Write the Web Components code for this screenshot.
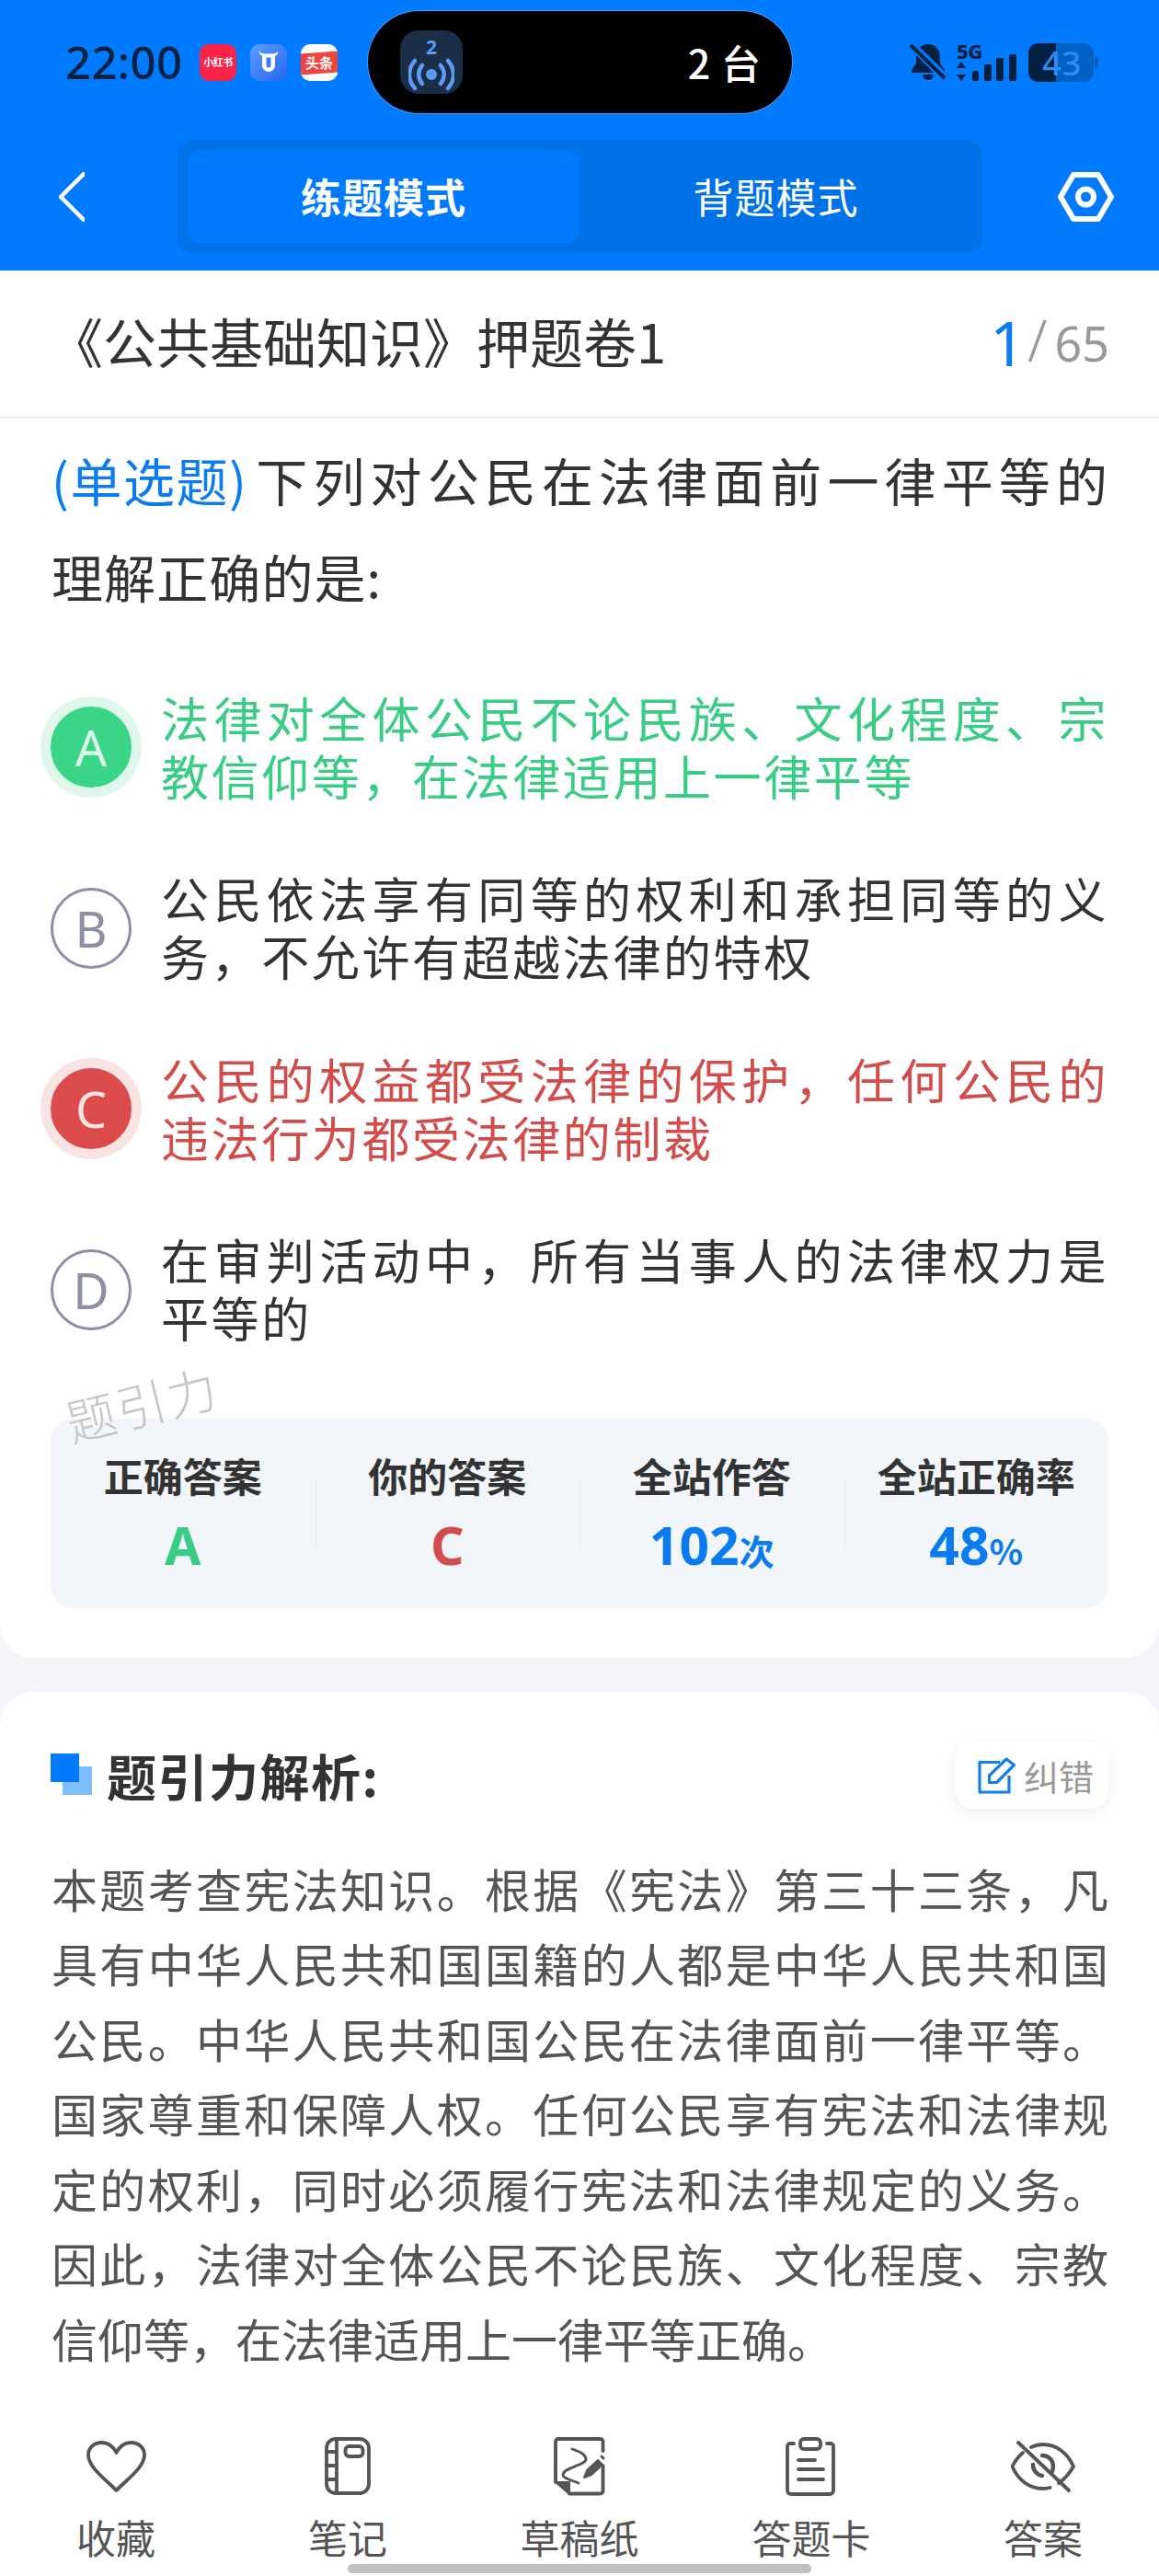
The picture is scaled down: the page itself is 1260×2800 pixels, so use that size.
<!DOCTYPE html>
<html lang="zh-CN"><head><meta charset="utf-8"><title>练题模式</title>
<style>
html,body{margin:0;padding:0;background:#f3f5f9}
body{width:1260px;height:2800px;overflow:hidden;font-family:"Noto Sans CJK SC","Noto Sans",sans-serif;color:#333}
</style></head><body>
<quiz-app>
  <app-header></app-header>
  <paper-title current="1" total="65">《公共基础知识》押题卷1</paper-title>
  <question-card>
    <span slot="stem" class="first">(单选题)</span>
    <span slot="line1">下列对公民在法律面前一律平等的</span>
    <span slot="line2">理解正确的是:</span>
    <quiz-option letter="A" state="right">法律对全体公民不论民族、文化程度、宗教信仰等，在法律适用上一律平等</quiz-option>
    <quiz-option letter="B">公民依法享有同等的权利和承担同等的义务，不允许有超越法律的特权</quiz-option>
    <quiz-option letter="C" state="wrong">公民的权益都受法律的保护，任何公民的违法行为都受法律的制裁</quiz-option>
    <quiz-option letter="D">在审判活动中，所有当事人的法律权力是平等的</quiz-option>
    <stat-panel slot="stats"></stat-panel>
  </question-card>
  <analysis-card>本题考查宪法知识。根据《宪法》第三十三条，凡具有中华人民共和国国籍的人都是中华人民共和国公民。中华人民共和国公民在法律面前一律平等。国家尊重和保障人权。任何公民享有宪法和法律规定的权利，同时必须履行宪法和法律规定的义务。因此，法律对全体公民不论民族、文化程度、宗教信仰等，在法律适用上一律平等正确。</analysis-card>
  <tool-bar></tool-bar>
</quiz-app>
<script>
function def(name, css, html){
  customElements.define(name, class extends HTMLElement{
    connectedCallback(){
      if(this.shadowRoot) return;
      const r=this.attachShadow({mode:'open'});
      r.innerHTML='<style>'+css+'</style>'+(typeof html==='function'?html(this):html);
    }
  });
}
def('quiz-app',`:host{display:flex;flex-direction:column;width:1260px;height:2800px;position:relative;overflow:hidden;background:#f3f5f9}`,`<slot></slot>`);

def('app-header',`
:host{display:block;height:294px;background:#007aff;box-sizing:border-box;color:#fff}
.status{display:flex;align-items:center;height:152px;padding-left:71px;box-sizing:border-box;padding-bottom:17px}
.time{font:500 49px/1 "Noto Sans",sans-serif;color:#04203f;width:146px;letter-spacing:.4px}
.apps{display:flex;gap:15px;width:183px}
.app{width:40px;height:40px;border-radius:10px;display:flex;align-items:center;justify-content:center;overflow:hidden;position:relative}
.a1{background:#fb2347;color:#fff;font:700 11px/1 "Noto Sans CJK SC";white-space:nowrap;letter-spacing:-.5px}
.a2{background:linear-gradient(135deg,#5c9cff,#2468ee)}
.a3{background:#fff;color:#fff;font:700 15px/1 "Noto Sans CJK SC"}
.a3 i{position:absolute;left:0;right:0;top:9px;height:23px;background:#f0453c;transform:skewY(-4deg)}
.a3 span{position:relative}
.pill{width:461px;height:111px;box-sizing:border-box;background:#000;border-radius:56px;box-shadow:0 0 0 1px rgba(255,255,255,.25);display:flex;align-items:center;justify-content:space-between;padding:0 33px 0 35px}
.chip{width:68px;height:69px;border-radius:20px;background:#1a2e48;color:#5b9bf5;display:flex;flex-direction:column;align-items:center;font:700 21px/1 "Noto Sans",sans-serif;padding-top:8px;box-sizing:border-box}
.chip svg{display:block;margin-top:-1px}
.dev{font:500 43px/1 "Noto Sans CJK SC",sans-serif;letter-spacing:1px;color:#fff;white-space:pre}
.right{margin-left:auto;display:flex;align-items:flex-start;height:44px;padding-right:66px}
.sig{position:relative;width:66px;height:44px;margin-right:12px}
.sig span{position:absolute;left:0;top:-3px;font:800 22px/24px "Noto Sans",sans-serif;color:#04203f;letter-spacing:-.5px}
.bat{position:relative;width:76px;height:44px}
.bat span{position:absolute;left:15px;top:0;font:500 37px/44px "Noto Sans",sans-serif;color:#2e8cf0}
.nav{display:flex;align-items:center;height:123px}
.tabs{width:875px;height:123px;border-radius:16px;background:#0072e8;box-sizing:border-box;padding:11px;display:flex}
.tab{flex:0 0 426px;display:flex;align-items:center;justify-content:center;font-size:44px;line-height:1;border-radius:14px;letter-spacing:1px;padding-bottom:2px;box-sizing:border-box}
.tab.on{background:#007aff;font-weight:700}
.tab.off{flex:1}
.gear{margin-left:82px}
`,`
<div class="status">
  <div class="time">22:00</div>
  <div class="apps">
    <div class="app a1">小红书</div>
    <div class="app a2"><svg width="32" height="32" viewBox="0 0 32 32"><path d="M9 9C7 8 5.500 6 5.500 3.500C7 5.500 9 6 11.500 6.500h9C23 6 25 5.500 26.500 3.500C26.500 6 25 8 23 9V19a7 7 0 0 1-14 0z" fill="#fff"/><path d="M13.500 10.500h5V19a2.500 2.500 0 0 1-5 0z" fill="#3d7df0"/></svg></div>
    <div class="app a3"><i></i><span>头条</span></div>
  </div>
  <div class="pill">
    <div class="chip">2<svg width="50" height="38" viewBox="0 0 50 38" fill="none" stroke="#5b9bf5" stroke-width="4.500" stroke-linecap="round"><circle cx="25" cy="20" r="6" fill="#5b9bf5" stroke="none"/><path d="M15 10c-5 6-5 14 0 20M35 10c5 6 5 14 0 20M7 5c-8 9-8 21 0 30M43 5c8 9 8 21 0 30"/></svg></div>
    <div class="dev">2 台</div>
  </div>
  <div class="right">
    <svg width="40" height="42" viewBox="0 0 40 42" style="margin-right:11px"><path d="M20 2c8 0 13 6 13 14v7l5 7v3H2v-3l5-7v-7C7 8 12 2 20 2zM14 35h12a6 6 0 0 1-12 0z" fill="#04203f"/><path d="M2 3l36 35" stroke="#007aff" stroke-width="9"/><path d="M1 3l37 36" stroke="#04203f" stroke-width="4"/></svg>
    <div class="sig"><span>5G</span><svg width="66" height="44" viewBox="0 0 66 44"><path d="M5 21l5 7H0zM5 42l5-7H0z" fill="#04203f"/><g fill="#04203f"><rect x="17" y="31" width="7" height="11" rx="2"/><rect x="30" y="24" width="8" height="18" rx="2"/><rect x="43" y="17" width="8" height="25" rx="2"/><rect x="57" y="13" width="8" height="29" rx="2"/></g></svg></div>
    <div class="bat"><svg width="76" height="44" viewBox="0 0 76 44"><rect x="0" y="1" width="71" height="42" rx="11" fill="#0060c4"/><path d="M11 1h19v42H11A11 11 0 0 1 0 32V12A11 11 0 0 1 11 1z" fill="#02203f"/><path d="M72 15h1a3 3 0 0 1 3 3v8a3 3 0 0 1-3 3h-1z" fill="#0060c4"/></svg><span>43</span></div>
  </div>
</div>
<div class="nav">
  <svg style="margin-left:64px;margin-right:101px;width:28px;height:54px" viewBox="0 0 28 54" fill="none" stroke="#fff" stroke-width="4.500" stroke-linecap="round" stroke-linejoin="round"><path d="M27 2L2 27l25 25"/></svg>
  <div class="tabs"><div class="tab on">练题模式</div><div class="tab off">背题模式</div></div>
  <svg class="gear" width="61" height="54" viewBox="0 0 61 54" fill="none" stroke="#fff" stroke-width="6" stroke-linejoin="round"><path d="M17 3h27l14 24-14 24H17L3 27z"/><circle cx="30.500" cy="27" r="8.500"/></svg>
</div>`);

def('paper-title',`
:host{display:flex;align-items:center;justify-content:space-between;height:160px;background:#fff;border-bottom:1px solid #dcdfe4;box-sizing:border-box;padding:0 54px 8px 54px;font-size:58px;color:#333;flex:none}
.n{display:flex;align-items:baseline;color:#999;font:400 52px/1 "Noto Sans",sans-serif}
.c{font-size:68px;color:#0a7cf0;margin-right:2px;position:relative;top:2px}
.s{font-weight:300;font-size:62px;margin-right:8px;position:relative;top:-3px}
.o{position:relative;top:-3px}
`,h=>`<slot></slot><div class="n"><span class="c">${h.getAttribute('current')}</span><span class="s">/</span><span class="o">${h.getAttribute('total')}</span></div>`);

def('question-card',`
:host{display:block;background:#fff;border-radius:0 0 36px 36px;padding:16px 55px 54px 57px;position:relative;flex:none;margin-bottom:37px}
.stem{font-size:56px;line-height:105px;color:#333;margin:-2px 0 71px -1px;letter-spacing:1.100px}
.l1{display:flex;justify-content:space-between;gap:9px}
.j{flex:1;text-align:justify;text-align-last:justify;display:block}
::slotted([slot=stem]){color:#0a7cf0;white-space:nowrap;letter-spacing:1.500px}
.opts{display:flex;flex-direction:column;gap:70.500px}
.stats{margin-top:77px;position:relative;margin-left:-2px}
.wm{position:absolute;left:70px;top:1044px;font-size:54px;font-weight:300;color:#c6c6c6;transform:rotate(-14deg);line-height:1;letter-spacing:2px;white-space:nowrap}
`,`<div class="stem"><div class="l1"><slot name="stem"></slot><span class="j"><slot name="line1"></slot></span></div><div><slot name="line2"></slot></div></div><div class="opts"><slot></slot></div><div class="stats"><slot name="stats"></slot></div><div class="wm">题引力</div>`);

def('quiz-option',`
:host{display:flex;align-items:center;min-height:126px;color:#333;font-size:52px;line-height:63px;letter-spacing:2.600px}
:host([state=right]){color:#38cc85}
:host([state=wrong]){color:#d24c4c}
.dot{flex:none;width:88px;height:88px;margin-left:-2px;margin-right:32px;border-radius:50%;box-sizing:border-box;border:3px solid #8b90a5;color:#8b90a5;display:flex;align-items:center;justify-content:center;font:400 54px/1 "Noto Sans",sans-serif;letter-spacing:0}
:host([state=right]) .dot{background:#3ad587;border-color:#3ad587;color:#dcf8ea;box-shadow:0 0 0 11px #e0f8ec}
:host([state=wrong]) .dot{background:#dc4c4c;border-color:#dc4c4c;color:#fbe4e4;box-shadow:0 0 0 11px #fae3e3}
.t{flex:1;text-align:justify;margin-top:-3px}
`,h=>`<div class="dot">${h.getAttribute('letter')}</div><div class="t"><slot></slot></div>`);

def('stat-panel',`
:host{display:grid;grid-template-columns:repeat(4,1fr);height:206px;background:#f2f5f9;border-radius:24px;width:1150px}
.c{display:flex;flex-direction:column;align-items:center;position:relative;padding-top:35px;box-sizing:border-box}
.c+.c::before{content:"";position:absolute;left:0;top:66px;height:76px;width:1px;background:#e6eaef}
.l{font-size:43px;font-weight:700;line-height:52px;color:#333;white-space:nowrap}
.v{margin-top:15px;font:700 57px/70px "Noto Sans",sans-serif;white-space:nowrap}
.v small{font-size:38px;font-weight:700;font-family:"Noto Sans CJK SC"}
`,`
<div class="c"><div class="l">正确答案</div><div class="v" style="color:#38cc85">A</div></div>
<div class="c"><div class="l">你的答案</div><div class="v" style="color:#d24c4c">C</div></div>
<div class="c"><div class="l">全站作答</div><div class="v" style="color:#0a7cf0">102<small>次</small></div></div>
<div class="c"><div class="l">全站正确率</div><div class="v" style="color:#0a7cf0">48<small>%</small></div></div>`);

def('analysis-card',`
:host{display:block;flex:1;background:#fff;border-radius:36px 36px 0 0;padding:55px 55px 0 57px;min-height:0}
.h{display:flex;align-items:center;height:72px;margin-bottom:46px}
.mark{position:relative;width:45px;height:45px;margin:-2px 16px 0 -2px;flex:none;display:block}
.t{font-size:54px;font-weight:700;color:#333;letter-spacing:1.500px}
.fix{margin-left:auto;width:167px;height:73px;box-sizing:border-box;padding-left:25px;border-radius:20px;background:#fff;box-shadow:0 4px 16px rgba(0,0,0,.07);display:flex;align-items:center;gap:9px;color:#999;font-size:38px;white-space:nowrap}
.b{font-size:50px;line-height:81.600px;color:#555;text-align:justify;margin-left:-1px}
`,`<div class="h"><svg class="mark" viewBox="0 0 45 45"><rect x="13" y="14" width="32" height="31" fill="#80bdff"/><rect width="31" height="31" fill="#007aff"/></svg><div class="t">题引力解析:</div>
<div class="fix"><svg width="41" height="40" viewBox="0 0 41 40" fill="none" stroke="#1280e8" stroke-width="3.200" stroke-linejoin="round"><path d="M24 5.500H2v32.500h32V20"/><path d="M12.500 27.500V20L31 2l8.500 6.500L20.500 27.500z"/></svg>纠错</div></div>
<div class="b"><slot></slot></div>`);

def('tool-bar',`
:host{position:absolute;left:0;right:0;bottom:0;height:180px;background:#fff;display:grid;grid-template-columns:repeat(5,252px);color:#555}
.i{display:flex;flex-direction:column;align-items:center;height:180px;position:relative}
.ic{height:65px;margin-top:28px;display:flex;align-items:center;justify-content:center}
.l{font-size:43px;line-height:50px;margin-top:19px;white-space:nowrap}
.home{position:absolute;left:378px;top:167px;width:504px;height:10px;border-radius:5px;background:#bfbfbf}
svg{fill:none;stroke:#555;stroke-width:3.800;stroke-linecap:round;stroke-linejoin:round;display:block}
`,`
<div class="i"><div class="ic"><svg width="65" height="56" viewBox="0 0 65 56"><path d="M32.500 54C22 43 2 29 2 15.500 2 7 9 2 16.500 2c7 0 12.500 4 16 11 3.500-7 9-11 16-11C56 2 63 7 63 15.500 63 29 43 43 32.500 54z"/></svg></div><div class="l">收藏</div></div>
<div class="i"><div class="ic"><svg width="50" height="63" viewBox="0 0 50 63"><rect x="2" y="2" width="46" height="59" rx="10"/><path d="M13 2v59M2 16h11M2 31h11M2 46h11"/><rect x="22.500" y="10" width="19" height="11" rx="4"/></svg></div><div class="l">笔记</div></div>
<div class="i"><div class="ic"><svg width="56" height="64" viewBox="0 0 56 64"><path d="M53.500 15V5a3 3 0 0 0-3-3H5a3 3 0 0 0-3 3v44M17 61.500h33.500a3 3 0 0 0 3-3V31"/><path d="M2 49l15 0v13z" fill="#555" stroke-width="2"/><path d="M20 13c6 2 15 5 15 11 0 7-25 9-25 17 0 4 10 6 17 9" stroke-width="2.800"/><path d="M33 44l3-8 12-11 5 5-12 11z" fill="#555" stroke-width="2"/><path d="M52 21l2 2" stroke-width="3"/></svg></div><div class="l">草稿纸</div></div>
<div class="i"><div class="ic"><svg width="56" height="64" viewBox="0 0 56 64"><path d="M9 7H5a3 3 0 0 0-3 3v48a4 4 0 0 0 4 4h42a4 4 0 0 0 4-4V10a3 3 0 0 0-3-3h-4"/><rect x="16" y="2" width="22" height="11" rx="4"/><path d="M14 25h18M14 35h27M14 46h27"/></svg></div><div class="l">答题卡</div></div>
<div class="i"><div class="ic"><svg width="70" height="56" viewBox="0 0 70 56"><path d="M13 13C7 18 4 23 1.500 28c6 14 18 24 33 24 3 0 6-.4 8-1M52 46c7-5 12-11 16-18-6-14-18-24-33-24-5 0-9 1-13 3"/><path d="M34 16c7 0 12 5 12 12 0 2-.4 3-1 5M24 26c0 6 4 11 10 12" stroke-width="4.500"/><path d="M8 2l55 52"/></svg></div><div class="l">答案</div></div>
<div class="home"></div>`);
</script>
</body></html>
